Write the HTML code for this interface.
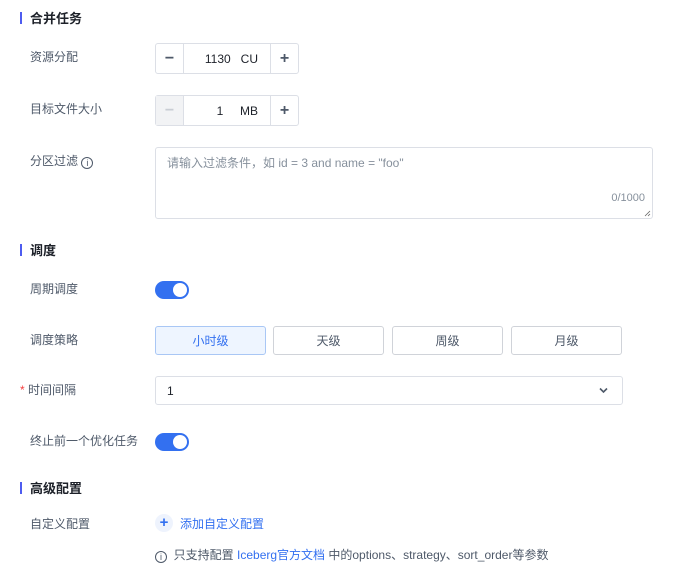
<!DOCTYPE html>
<html><head><meta charset="utf-8"><style>
*{box-sizing:border-box;margin:0;padding:0}
body{width:700px;height:568px;background:#fff;font-family:"Liberation Sans","Noto Sans CJK SC",sans-serif;font-size:12px;color:#1d2129;position:relative;overflow:hidden}
.a{position:absolute}
.sec{font-size:13px;font-weight:bold;color:#1d2129}
.bar{position:absolute;left:20px;width:2px;height:12px;background:#4e5cf0}
.lab{color:#4e5969;font-size:12px}
.step{border:1px solid #dcdfe6;border-radius:3px;height:31px;width:144px;display:flex}
.step div{display:flex;align-items:center;justify-content:center}
.m{width:28px;border-right:1px solid #dcdfe6;font-size:16px;font-weight:bold;color:#4e5969}
.p{width:28px;border-left:1px solid #dcdfe6;font-size:16px;font-weight:bold;color:#4e5969}
.n{flex:1;justify-content:flex-end!important;padding-right:12px;font-size:12px;color:#1d2129}
.tog{width:34px;height:18px;border-radius:9px;background:#3370f0}
.tog::after{content:"";position:absolute;right:2px;top:2px;width:14px;height:14px;border-radius:50%;background:#fff}
.btn{height:29px;width:111px;border:1px solid #d0d3d9;border-radius:3px;display:flex;align-items:center;justify-content:center;color:#4e5969}
.ic{display:inline-block;width:12px;height:12px;border:1px solid #4e5969;border-radius:50%;font-size:9px;text-align:center;line-height:10px;vertical-align:-1px}
</style></head><body>
<div class="bar" style="top:12px"></div><div class="a sec" style="left:30px;top:8px">合并任务</div>
<div class="a lab" style="left:30px;top:48px">资源分配</div>
<div class="a step" style="left:155px;top:43px"><div class="m">−</div><div class="n">1130&nbsp;&nbsp;&nbsp;CU</div><div class="p">+</div></div>
<div class="a lab" style="left:30px;top:100px">目标文件大小</div>
<div class="a step" style="left:155px;top:95px"><div class="m" style="background:#f2f3f5;color:#c9cdd4">−</div><div class="n">1&nbsp;&nbsp;&nbsp;&nbsp;&nbsp;MB</div><div class="p">+</div></div>
<div class="a lab" style="left:30px;top:152px">分区过滤 <span class="ic">i</span></div>
<div class="a" style="left:155px;top:147px;width:498px;height:72px;border:1px solid #dcdfe6;border-radius:3px"><div class="a" style="left:11px;top:6px;color:#86909c">请输入过滤条件，如 id = 3 and name = "foo"</div><div class="a" style="right:7px;top:44px;color:#86909c;font-size:11px">0/1000</div><svg class="a" style="right:1px;bottom:1px" width="7" height="7"><path d="M1 6L6 1M4 6L6 4" stroke="#666" stroke-width="0.8"/></svg></div>
<div class="bar" style="top:244px"></div><div class="a sec" style="left:30px;top:240px">调度</div>
<div class="a lab" style="left:30px;top:280px">周期调度</div>
<div class="a tog" style="left:155px;top:281px"></div>
<div class="a lab" style="left:30px;top:331px">调度策略</div>
<div class="a btn" style="left:155px;top:326px;background:#eef5ff;border-color:#a9c7f5;color:#3370f0">小时级</div>
<div class="a btn" style="left:273px;top:326px">天级</div>
<div class="a btn" style="left:392px;top:326px">周级</div>
<div class="a btn" style="left:511px;top:326px">月级</div>
<div class="a lab" style="left:20px;top:381px"><span style="color:#f53f3f">*</span> 时间间隔</div>
<div class="a" style="left:155px;top:376px;width:468px;height:29px;border:1px solid #dcdfe6;border-radius:3px"><span class="a" style="left:11px;top:7px">1</span><svg class="a" style="right:14px;top:10px" width="9" height="7" viewBox="0 0 9 7"><path d="M1 1.5L4.5 5L8 1.5" stroke="#4e5969" stroke-width="1.6" fill="none"/></svg></div>
<div class="a lab" style="left:30px;top:432px">终止前一个优化任务</div>
<div class="a tog" style="left:155px;top:433px"></div>
<div class="bar" style="top:482px"></div><div class="a sec" style="left:30px;top:478px">高级配置</div>
<div class="a lab" style="left:30px;top:515px">自定义配置</div>
<div class="a" style="left:155px;top:514px;width:18px;height:18px;border-radius:50%;background:#eef3fd;color:#3370f0;font-weight:bold;text-align:center;line-height:18px;font-size:15px">+</div>
<div class="a" style="left:180px;top:515px;color:#3370f0">添加自定义配置</div>
<div class="a" style="left:155px;top:546px;color:#4e5969"><span class="ic">i</span>&nbsp; 只支持配置 <span style="color:#3370f0">Iceberg官方文档</span> 中的options、strategy、sort_order等参数</div>
</body></html>
